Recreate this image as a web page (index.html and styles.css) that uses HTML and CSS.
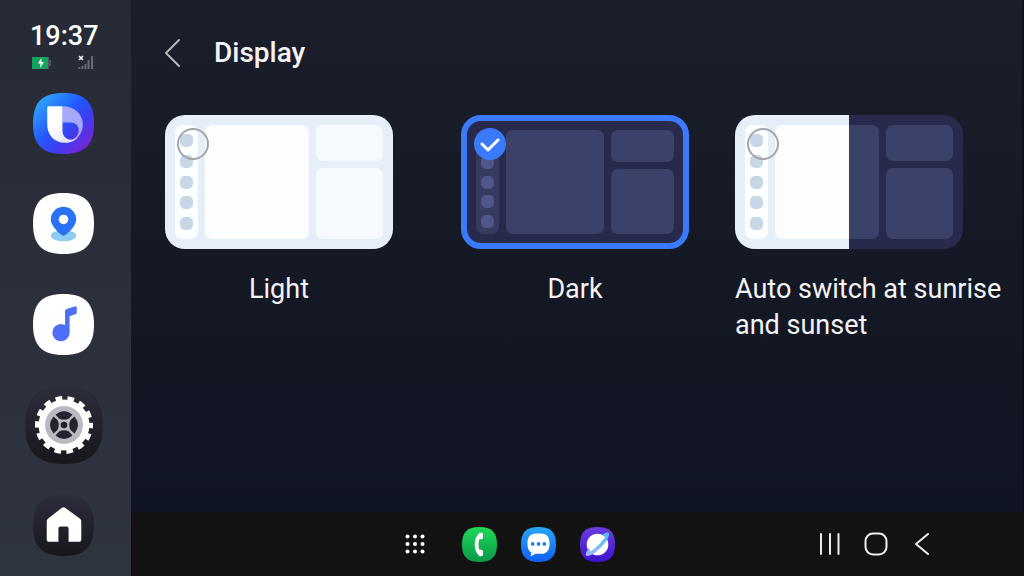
FILE: index.html
```
<!DOCTYPE html>
<html lang="en">
<head>
  <meta charset="UTF-8">
  <title>Display</title>
  <link rel="stylesheet" href="styles.css">
</head>
<body>

<aside class="sidebar">
  <div class="status">
    <time class="clock">19:37</time>
    <div class="status-icons">
      <svg width="20" height="12" viewBox="0 0 20 12" role="img" aria-label="Battery charging">
        <rect width="16" height="12" fill="#14a35f"/>
        <path d="M16 0h1v3h2v6h-2v3h-1z" fill="#4c535e"/>
        <path d="M9.5 1L6 6.6h2.6L8 11l4-5.8H9.400z" fill="#fff"/>
      </svg>
      <svg width="16" height="15" viewBox="0 0 16 15" role="img" aria-label="No signal">
        <path d="M1.500 14v-2M4.500 14v-3M7.500 14V9M10.500 14V5M14 14V1" stroke="#676b75" stroke-width="2"/>
        <path d="M1 1l4 4M5 1L1 5" stroke="#fff" stroke-width="1.600"/>
      </svg>
    </div>
  </div>

  <nav class="apps">
    <a href="#assistant" class="app" aria-label="Assistant">
      <svg class="icon" viewBox="0 0 60 60">
        <defs>
          <linearGradient id="bixbyBg" x1="0" y1="0" x2="1" y2="1">
            <stop offset="0.100" stop-color="#2ea6fb"/>
            <stop offset="0.450" stop-color="#2358fb"/>
            <stop offset="0.650" stop-color="#3f3df0"/>
            <stop offset="0.950" stop-color="#8420d0"/>
          </linearGradient>
          <linearGradient id="bixbyB" x1="0" y1="0" x2="1" y2="1">
            <stop offset="0.400" stop-color="#fff"/>
            <stop offset="1" stop-color="#cfd0ff"/>
          </linearGradient>
        </defs>
        <path d="M30 0C51 0 60 9 60 30S51 60 30 60 0 51 0 30 9 0 30 0Z" fill="url(#bixbyBg)"/>
        <path d="M29 13c12 0 20 8 20 18s-8 18-18 18c8-1 14-6 14-12 0-5-3-8-8-8h-8z" fill="#a7a8fb"/>
        <path d="M14 13h15v24c0 6 4 9 8 9 3 0 6-2 8-4-3 5-8 7-14 7-10 0-17-8-17-18V15q0-2 1-2z" fill="url(#bixbyB)"/>
      </svg>
    </a>
    <a href="#maps" class="app" aria-label="Maps">
      <svg class="icon" viewBox="0 0 60 60">
        <path d="M30 0C51 0 60 9 60 30S51 60 30 60 0 51 0 30 9 0 30 0Z" fill="#fff"/>
        <ellipse cx="30" cy="42" rx="12.500" ry="5.500" fill="#8fcdf0"/>
        <path d="M30 42c-2 0-12.500-9-12.500-16a12.500 12.500 0 0 1 25 0c0 7-10.500 16-12.500 16z" fill="#2a72f5"/>
        <circle cx="30" cy="26" r="4.700" fill="#fff"/>
      </svg>
    </a>
    <a href="#music" class="app" aria-label="Music">
      <svg class="icon" viewBox="0 0 60 60">
        <path d="M30 0C51 0 60 9 60 30S51 60 30 60 0 51 0 30 9 0 30 0Z" fill="#fff"/>
        <circle cx="27.500" cy="38" r="8.500" fill="#4d6ff8"/>
        <path d="M31.500 38V17q0-2 2-2.600L42 12q1 0 1 1v6.500L36 22v16z" fill="#4d6ff8"/>
      </svg>
    </a>
    <a href="#settings" class="app" aria-label="Settings" aria-current="page">
      <svg class="icon icon-large" viewBox="0 0 78 78">
        <defs>
          <linearGradient id="darkBg" x1="0" y1="0" x2="0" y2="1">
            <stop offset="0" stop-color="#2c2e3b"/>
            <stop offset="1" stop-color="#17171c"/>
          </linearGradient>
          <path id="wheelGap" d="M30.500 28.500q8.500-7 17 0l-3.500 4q-5 2.500-10 0z"/>
        </defs>
        <path d="M39 0C66 0 78 12 78 39S66 78 39 78 0 66 0 39 12 0 39 0Z" fill="url(#darkBg)"/>
        <circle cx="39" cy="39" r="25.500" fill="#fff"/>
        <circle cx="39" cy="39" r="26.500" fill="none" stroke="#fff" stroke-width="5" stroke-dasharray="6.500 5.393" stroke-dashoffset="3.250"/>
        <circle cx="39" cy="39" r="19" fill="#b9bac0"/>
        <g fill="#23242e">
          <use href="#wheelGap"/>
          <use href="#wheelGap" transform="rotate(90 39 39)"/>
          <use href="#wheelGap" transform="rotate(180 39 39)"/>
          <use href="#wheelGap" transform="rotate(270 39 39)"/>
          <circle cx="39" cy="39" r="3.300"/>
        </g>
      </svg>
    </a>
    <a href="#home" class="app" aria-label="Home">
      <svg class="icon" viewBox="0 0 60 60">
        <path d="M30 0C51 0 60 9 60 30S51 60 30 60 0 51 0 30 9 0 30 0Z" fill="url(#darkBg)"/>
        <path d="M28.500 12.500q1.500-1 3 0L46 23q1.500 1 1.500 3v18q0 2-2 2H35V33q0-2-2-2h-6q-2 0-2 2v13H15.500q-2 0-2-2V26q0-2 1.500-3z" fill="#fff"/>
      </svg>
    </a>
  </nav>
</aside>

<div class="screen">
  <main class="settings">
    <header class="header">
      <button type="button" class="back" aria-label="Back">
        <svg width="18" height="32" viewBox="0 0 18 32"><path d="M16 3L3 16l13 13" fill="none" stroke="#b4b6bc" stroke-width="2" stroke-linecap="round" stroke-linejoin="round"/></svg>
      </button>
      <h1>Display</h1>
    </header>

    <form class="modes">
      <label class="mode light">
        <span class="preview">
          <span class="rail"><i></i><i></i><i></i><i></i><i></i></span>
          <span class="pane"></span>
          <span class="stack"><span></span><span></span></span>
          <input type="radio" name="mode" value="light">
        </span>
        <span class="mode-name">Light</span>
      </label>

      <label class="mode dark">
        <span class="preview">
          <span class="rail"><i></i><i></i><i></i><i></i><i></i></span>
          <span class="pane"></span>
          <span class="stack"><span></span><span></span></span>
          <input type="radio" name="mode" value="dark" checked>
          <svg class="check" viewBox="0 0 32 32"><path d="M8 16l6 6L24 12" fill="none" stroke="#fff" stroke-width="3" stroke-linecap="round" stroke-linejoin="round"/></svg>
        </span>
        <span class="mode-name">Dark</span>
      </label>

      <label class="mode auto">
        <span class="preview">
          <span class="rail"><i></i><i></i><i></i><i></i><i></i></span>
          <span class="pane"></span>
          <span class="stack"><span></span><span></span></span>
          <input type="radio" name="mode" value="auto">
        </span>
        <span class="mode-name">Auto switch at sunrise and sunset</span>
      </label>
    </form>
  </main>

  <footer class="taskbar">
    <div class="dock">
      <button type="button" class="dock-app apps-grid" aria-label="All apps">
        <svg viewBox="0 0 22 22" fill="#fff">
          <circle cx="3.500" cy="3.500" r="2"/><circle cx="11" cy="3.500" r="2"/><circle cx="18.500" cy="3.500" r="2"/>
          <circle cx="3.500" cy="11" r="2"/><circle cx="11" cy="11" r="2"/><circle cx="18.500" cy="11" r="2"/>
          <circle cx="3.500" cy="18.500" r="2"/><circle cx="11" cy="18.500" r="2"/><circle cx="18.500" cy="18.500" r="2"/>
        </svg>
      </button>
      <a href="#phone" class="dock-app" aria-label="Phone">
        <svg viewBox="0 0 60 60">
          <defs>
            <linearGradient id="phoneBg" x1="0" y1="0" x2="0" y2="1">
              <stop offset="0" stop-color="#1fd858"/>
              <stop offset="1" stop-color="#08984a"/>
            </linearGradient>
          </defs>
          <path d="M30 0C51 0 60 9 60 30S51 60 30 60 0 51 0 30 9 0 30 0Z" fill="url(#phoneBg)"/>
          <path d="M31 14C23 20 23 40 31 46" fill="none" stroke="#fff" stroke-width="6.500" stroke-linecap="round"/>
          <rect x="28" y="10" width="8" height="11" rx="3" fill="#fff"/>
          <rect x="28" y="39" width="8" height="11" rx="3" fill="#fff"/>
        </svg>
      </a>
      <a href="#messages" class="dock-app" aria-label="Messages">
        <svg viewBox="0 0 60 60">
          <defs>
            <linearGradient id="msgBg" x1="0" y1="0" x2="0" y2="1">
              <stop offset="0" stop-color="#26a7f8"/>
              <stop offset="1" stop-color="#1160f3"/>
            </linearGradient>
          </defs>
          <path d="M30 0C51 0 60 9 60 30S51 60 30 60 0 51 0 30 9 0 30 0Z" fill="url(#msgBg)"/>
          <path d="M26 11h8c10 0 15 6 15 17.500S44 46 34 46h-9l-8 4c-1 0-1-1 0-2l1-4c-5-3-7-8-7-15.500C11 17 16 11 26 11z" fill="#fff"/>
          <g fill="#1c7cf4"><circle cx="20" cy="29" r="3.200"/><circle cx="30" cy="29" r="3.200"/><circle cx="40" cy="29" r="3.200"/></g>
        </svg>
      </a>
      <a href="#internet" class="dock-app" aria-label="Internet">
        <svg viewBox="0 0 60 60">
          <defs>
            <linearGradient id="netBg" x1="0" y1="0" x2="0" y2="1">
              <stop offset="0" stop-color="#6a3ce0"/>
              <stop offset="1" stop-color="#3f12d0"/>
            </linearGradient>
            <linearGradient id="ring" x1="0" y1="1" x2="1" y2="0">
              <stop offset="0" stop-color="#a3b8fa"/>
              <stop offset="1" stop-color="#4cc0ee"/>
            </linearGradient>
          </defs>
          <path d="M30 0C51 0 60 9 60 30S51 60 30 60 0 51 0 30 9 0 30 0Z" fill="url(#netBg)"/>
          <circle cx="30" cy="30" r="18.500" fill="#fff"/>
          <path d="M39 13c5-4 11-5 11-1 0 8-11 21-21 29-9 8-18 11-19 7-1-3 2-8 6-13 0 3 1 5 2 7 8-5 20-17 25-25-1-1-2-3-4-4z" fill="url(#ring)"/>
        </svg>
      </a>
    </div>

    <nav class="nav-keys">
      <button type="button" aria-label="Recents">
        <svg width="24" height="24" viewBox="0 0 24 24"><path d="M3 2v20M12 2v20M20.500 2v20" stroke="#ededed" stroke-width="2" stroke-linecap="round"/></svg>
      </button>
      <button type="button" aria-label="Home">
        <svg width="24" height="24" viewBox="0 0 24 24"><rect x="1.500" y="1.500" width="21" height="21" rx="7.500" fill="none" stroke="#ededed" stroke-width="2"/></svg>
      </button>
      <button type="button" aria-label="Back">
        <svg width="24" height="24" viewBox="0 0 24 24"><path d="M18 2L6 12l12 10" fill="none" stroke="#ededed" stroke-width="2" stroke-linecap="round" stroke-linejoin="round"/></svg>
      </button>
    </nav>
  </footer>
</div>

</body>
</html>
```
FILE: styles.css
```
* {
  box-sizing: border-box;
}
body {
  display: flex;
  min-height: 100vh;
  margin: 0;
  font-family: Roboto, "Liberation Sans", sans-serif;
  color: #f4f4f6;
  background: #121212;
}
button {
  padding: 0;
  border: none;
  background: none;
  cursor: pointer;
}
svg {
  display: block;
}

/* left rail with clock and pinned apps */
.sidebar {
  display: flex;
  flex-direction: column;
  flex: none;
  width: 131px;
  background: linear-gradient(#262a36, #2f3540);
}
.status {
  padding: 20px 33px 0 30px;
  height: 73px;
}
.clock {
  display: block;
  font-size: 27px;
  font-weight: 500;
  line-height: 32px;
  color: #fff;
}
.status-icons {
  display: flex;
  justify-content: space-between;
  align-items: center;
  padding: 3px 4px 0 2px;
}
.apps {
  display: flex;
  flex-direction: column;
  flex: 1;
}
.app {
  display: flex;
  flex: 1;
  align-items: center;
  justify-content: center;
  padding-right: 4px;
}
.icon {
  width: 61px;
  height: 61px;
}
.icon-large {
  width: 78px;
  height: 78px;
}

/* settings page */
.screen {
  display: flex;
  flex-direction: column;
  flex: 1;
}
.settings {
  flex: 1;
  border-right: 2px solid #0e1019;
  background: linear-gradient(#1b1e2b, #141824 60%, #101524);
}
.header {
  display: flex;
  align-items: center;
  gap: 31px;
  padding: 33px 32px 0;
}
.back {
  width: 20px;
}
h1 {
  margin: 0;
  font-size: 28px;
  font-weight: 500;
  line-height: 40px;
}
.modes {
  display: grid;
  grid-template-columns: repeat(3, 1fr);
  padding: 42px 3px 32px 0;
}
.mode {
  display: flex;
  flex-direction: column;
  align-items: center;
  gap: 22px;
  cursor: pointer;
}
.mode-name {
  font-size: 27px;
  line-height: 36px;
}
.auto {
  align-items: flex-start;
  padding-left: 12px;
}

.preview {
  --frame: #e6eef8;
  --rail: #fdfeff;
  --pane: #fdfdff;
  --card: #f6fafe;
  --dot: #c8d7e6;
  position: relative;
  display: flex;
  gap: 7px;
  width: 228px;
  height: 134px;
  padding: 10px;
  border-radius: 20px;
  background: var(--frame);
}
.rail {
  display: flex;
  flex-direction: column;
  justify-content: space-between;
  align-items: center;
  width: 23px;
  padding: 9px 0;
  border-radius: 7px;
  background: var(--rail);
}
.rail i {
  width: 13px;
  height: 13px;
  border-radius: 5px;
  background: var(--dot);
}
.pane {
  flex: 1;
  border-radius: 7px;
  background: var(--pane);
}
.stack {
  display: grid;
  grid-template-rows: 1fr 2fr;
  gap: 7px;
  width: 67px;
}
.stack span {
  border-radius: 7px;
  background: var(--card);
}
.dark .preview {
  --frame: #282a4d;
  --rail: #363a5f;
  --pane: #3b4168;
  --card: #3b4168;
  --dot: #4e568a;
  padding: 9px;
  border: 6px solid #3b7bfb;
}
.dark .rail {
  padding: 6px 0;
}
.dark .stack {
  width: 63px;
}
.auto .preview {
  --frame: linear-gradient(90deg, #e6eef8 50%, #282a4d 50%);
  --pane: linear-gradient(90deg, #fdfdff 71%, #3b4168 71%);
  --card: #3b4168;
}

/* selection circle over the preview corner */
.preview input {
  position: absolute;
  top: 13px;
  left: 12px;
  width: 32px;
  height: 32px;
  margin: 0;
  appearance: none;
  border: 2px solid #a5a5a8;
  border-radius: 50%;
}
.dark .preview input {
  top: 7px;
  left: 7px;
  border-color: #3b7bfb;
  background: #3b7bfb;
}
.check {
  position: absolute;
  top: 7px;
  left: 7px;
  width: 32px;
  height: 32px;
}

/* bottom bar */
.taskbar {
  display: flex;
  align-items: center;
  justify-content: space-between;
  height: 64px;
  padding: 0 90px 0 30.6%;
  background: #121212;
}
.dock {
  display: flex;
  align-items: center;
  gap: 24px;
}
.dock-app svg {
  width: 35px;
  height: 35px;
}
.apps-grid {
  margin-right: 12px;
}
.apps-grid svg {
  width: 22px;
  height: 22px;
}
.nav-keys {
  display: flex;
  gap: 22px;
}
```
